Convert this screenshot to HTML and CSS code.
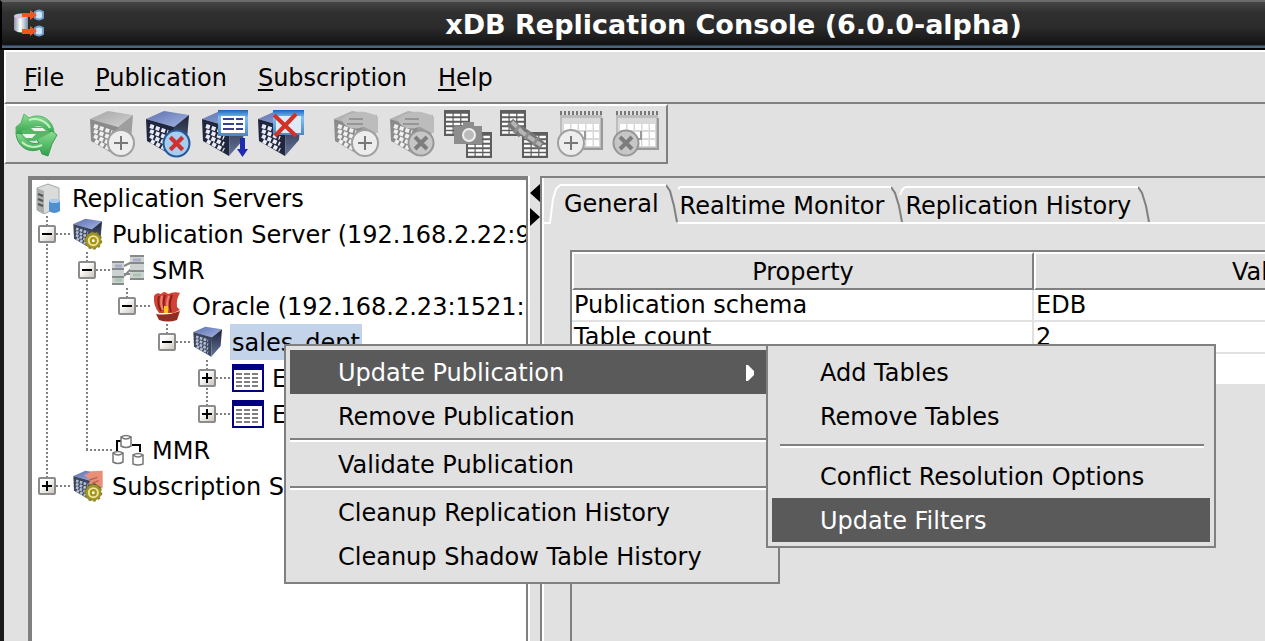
FILE: index.html
```
<!DOCTYPE html>
<html lang="en">
<head>
<meta charset="utf-8">
<title>xDB Replication Console</title>
<link rel="stylesheet" href="styles.css">
</head>
<body>
<svg class="defs" aria-hidden="true">
  <defs>
    <linearGradient id="gTop" x1="0" y1="0" x2="1" y2="1"><stop offset="0" stop-color="#5d70ae"/><stop offset="1" stop-color="#a3b4e4"/></linearGradient>
    <linearGradient id="gTopGray" x1="0" y1="0" x2="1" y2="1"><stop offset="0" stop-color="#a5a5a5"/><stop offset="1" stop-color="#d2d2d2"/></linearGradient>
    <linearGradient id="gRight" x1="0" y1="0" x2="0" y2="1"><stop offset="0" stop-color="#1d2438"/><stop offset="1" stop-color="#65759b"/></linearGradient>
    <linearGradient id="gWin" x1="0" y1="0" x2="0" y2="1"><stop offset="0" stop-color="#1b65bf"/><stop offset=".3" stop-color="#7fc0f4"/><stop offset="1" stop-color="#4d86bd"/></linearGradient>
    <linearGradient id="gGreen" x1="0" y1="0" x2="0" y2="1"><stop offset="0" stop-color="#8bdf91"/><stop offset="1" stop-color="#2f9f4b"/></linearGradient>
    <linearGradient id="gCyl" x1="0" y1="0" x2="1" y2="0"><stop offset="0" stop-color="#8f8fae"/><stop offset=".45" stop-color="#ffffff"/><stop offset="1" stop-color="#8888a4"/></linearGradient>
    <symbol id="cube" viewBox="0 0 48 48">
      <path class="cube-top" d="M2 9 20 1 45 5 30 17Z"/>
      <path class="cube-left" d="M2 9 30 17 29 46 3 31Z"/>
      <path class="cube-right" d="M30 17 45 5 43 30 29 46Z"/>
      <path class="cube-lights" d="M6 16 24 22M6 21 24 28M6 26 24 34M7 31 24 40"/>
    </symbol>
    <symbol id="plusBadge" viewBox="0 0 28 28">
      <circle cx="14" cy="14" r="13" fill="#ededed" stroke="#a0a0a0" stroke-width="2"/>
      <path d="M14 7V21M7 14H21" stroke="#777" stroke-width="2"/>
    </symbol>
    <symbol id="crossBadge" viewBox="0 0 28 28">
      <circle class="cross-disc" cx="14" cy="14" r="12.5"/>
      <path class="cross-mark" d="M8 8 20 20M20 8 8 20"/>
    </symbol>
    <symbol id="grid" viewBox="0 0 26 26">
      <path d="M0 0H26V26H0Z" fill="#5e5e5e"/>
      <path d="M2 5H24M2 9.500H24M2 14H24M2 18.500H24M2 22.500H24" stroke="#fff" stroke-width="2.600" stroke-dasharray="6.500 1.200"/>
    </symbol>
    <symbol id="calendar" viewBox="0 0 48 48">
      <path d="M4 5H46V40H4Z" fill="#bdbdbd"/>
      <path d="M6 8H44V37H6Z" fill="#d9d9d9"/>
      <path d="M4 3H47" stroke="#777" stroke-width="4" stroke-dasharray="2 2"/>
      <path d="M8 17H43M8 25H43M8 33H43" stroke="#fff" stroke-width="6" stroke-dasharray="6 1.500"/>
      <path d="M29 21V29H20M46 8V39H5" fill="none" stroke="#9a9a9a" stroke-width="2"/>
    </symbol>
    <symbol id="hand" viewBox="0 0 48 48">
      <path d="M10 10C14 2 24 4 26 2C34 1 40 4 46 7V23C38 23 34 14 28 18C18 20 12 16 10 10Z"/>
    </symbol>
    <symbol id="gear" viewBox="0 0 22 22">
      <circle cx="11" cy="11" r="8" fill="#eee69a" stroke="#a19525" stroke-width="3"/>
      <circle cx="11" cy="11" r="9.600" fill="none" stroke="#8e8320" stroke-width="2" stroke-dasharray="3 3"/>
      <circle cx="11" cy="11" r="3" fill="#fff" stroke="#a69414" stroke-width="2.500"/>
    </symbol>
    <symbol id="sheet" viewBox="0 0 32 32">
      <path d="M1 3H31V29H1Z" fill="#fff" stroke="#000080" stroke-width="2"/>
      <path d="M0 2H32V8H0Z" fill="#000080"/>
      <path d="M4 12H28M4 16H28M4 20H28M4 24H28" stroke="#808080" stroke-width="2" stroke-dasharray="6 2"/>
    </symbol>
  </defs>
</svg>

<div class="window">
  <header class="titlebar">
    <svg class="app-icon" viewBox="0 0 32 32" aria-hidden="true">
      <path d="M0 7Q7 3 14 7V21Q7 26 0 21Z" fill="url(#gCyl)"/>
      <ellipse cx="7" cy="7" rx="7" ry="2.500" fill="#c9c9dd"/>
      <path d="M21 3Q25 0 29 3V9Q25 12 21 9ZM21 19Q25 16 29 19V25Q25 28 21 25Z" fill="#cfe4f8" stroke="#6f9ccc" stroke-width="2"/>
      <path d="M8 4H16V1L23 6 16 11V8H8ZM8 20H16V17L23 22 16 27V25H8Z" fill="#ee5722"/>
    </svg>
    <h1 class="title">xDB Replication Console (6.0.0-alpha)</h1>
  </header>

  <div class="client">
    <nav class="menubar">
      <button type="button" class="menu-btn"><u>F</u>ile</button>
      <button type="button" class="menu-btn"><u>P</u>ublication</button>
      <button type="button" class="menu-btn"><u>S</u>ubscription</button>
      <button type="button" class="menu-btn"><u>H</u>elp</button>
    </nav>

    <div class="toolbar" role="toolbar">
      <div class="tool-group">
        <button type="button" class="tool" aria-label="Refresh">
          <svg viewBox="0 0 48 48"><path d="M4 23 4 17 9 13 12 4 17 8C29 2 41 10 42 22L38 24C34 16 28 14 20 17L10 25Z" fill="url(#gGreen)" stroke="#56b568"/><path d="M4 23C5 37 17 44 28 39L30 44 36 46 40 34 45 25 40 21 24 28 27 33C20 35 13 31 10 24Z" fill="url(#gGreen)" stroke="#3b9c50"/><path d="M9 21 20 17H33L38 23 23 31H15Z" fill="#54b966"/><path d="M10 24H24L20 28H14ZM19 18H31L34 21H22Z" fill="#edf5ec"/><path d="M17 10C25 7 34 11 38 18M10 32C16 38 24 38 30 35" fill="none" stroke="#c2f0c3" stroke-width="2"/></svg>
        </button>
      </div>
      <div class="tool-group">
        <button type="button" class="tool" aria-label="Create publication" disabled>
          <svg viewBox="0 0 48 48"><use href="#cube" class="gray"/><use href="#plusBadge" x="19" y="19" width="28" height="28"/></svg>
        </button>
        <button type="button" class="tool" aria-label="Remove publication">
          <svg viewBox="0 0 48 48"><use href="#cube" class="blue"/><use href="#crossBadge" x="18" y="19" width="29" height="29" class="red"/></svg>
        </button>
        <button type="button" class="tool" aria-label="Update publication">
          <svg viewBox="0 0 48 48"><use href="#cube" class="blue"/><path d="M18 0H48V26H18Z" fill="url(#gWin)"/><path d="M21 6H45V23H21Z" fill="#fff"/><path d="M23 9H43M23 14H43M23 19H43" stroke="#34438f" stroke-width="2" stroke-dasharray="11 2 7 2"/><path d="M40 28H45V39H48L42.500 47 37 39H40Z" fill="#1d2bb0"/></svg>
        </button>
        <button type="button" class="tool" aria-label="Drop snapshot">
          <svg viewBox="0 0 48 48"><use href="#cube" class="blue"/><path d="M17 0H48V25H17Z" fill="url(#gWin)"/><path d="M20 6H45V23H20Z" fill="#dfeaf8"/><path d="M18 5 40 26M40 4 19 26" stroke="#d33227" stroke-width="4"/></svg>
        </button>
      </div>
      <div class="tool-group">
        <button type="button" class="tool" aria-label="Create subscription" disabled>
          <svg viewBox="0 0 48 48"><use href="#cube" class="gray"/><use href="#hand" fill="#bcbcbc"/><path d="M17 9H31M15 14H31" stroke="#969696" stroke-width="2"/><use href="#plusBadge" x="19" y="19" width="28" height="28"/></svg>
        </button>
        <button type="button" class="tool" aria-label="Remove subscription" disabled>
          <svg viewBox="0 0 48 48"><use href="#cube" class="gray"/><use href="#hand" fill="#bcbcbc"/><path d="M17 9H31M15 14H31" stroke="#969696" stroke-width="2"/><use href="#crossBadge" x="19" y="19" width="28" height="28" class="dim"/></svg>
        </button>
        <button type="button" class="tool" aria-label="Snapshot" disabled>
          <svg viewBox="0 0 48 48"><use href="#grid" width="26" height="26"/><use href="#grid" x="22" y="22" width="26" height="26"/><path d="M10 16H19V12H30V16H38V34H10Z" fill="#8d8d8d"/><circle cx="25" cy="25" r="6" fill="#bbb" stroke="#eee" stroke-width="2"/></svg>
        </button>
        <button type="button" class="tool" aria-label="Synchronize" disabled>
          <svg viewBox="0 0 48 48"><use href="#grid" width="26" height="26"/><use href="#grid" x="22" y="22" width="26" height="26"/><path d="M10 12 22 24M18 19 34 29M27 25 42 36" stroke="#777" stroke-width="9"/><path d="M12 12 22 22M20 21 32 29M32 29 41 35" stroke="#b5b5b5" stroke-width="4"/><path d="M19 16 14 23M29 22 25 29M38 28 33 35" stroke="#8d8d8d" stroke-width="3"/></svg>
        </button>
        <button type="button" class="tool" aria-label="Create schedule" disabled>
          <svg viewBox="0 0 48 48"><use href="#calendar"/><use href="#plusBadge" x="1" y="19" width="28" height="28"/></svg>
        </button>
        <button type="button" class="tool" aria-label="Remove schedule" disabled>
          <svg viewBox="0 0 48 48"><use href="#calendar"/><use href="#crossBadge" x="0" y="19" width="28" height="28" class="dim"/></svg>
        </button>
      </div>
    </div>

    <main class="split">
      <section class="tree" aria-label="Replication servers">
        <div class="row root">
          <svg class="icon" viewBox="0 0 32 32"><path d="M5 6 16 2 27 6V25L12 32 5 28Z" fill="#d9dcda" stroke="#a4a8a6"/><path d="M5 6 12 9V32L5 28Z" fill="#a9adac"/><path d="M6 12 11 14M6 17 11 19M6 22 11 24" stroke="#555" stroke-width="2"/><path d="M17 19Q22 15 28 19V29Q22 33 17 29Z" fill="#4e8fd0"/><ellipse cx="22.500" cy="19" rx="5.500" ry="2" fill="#a9cdf0"/></svg>
          <span class="label">Replication Servers</span>
        </div>
        <ul class="branch">
          <li>
            <div class="row">
              <button type="button" class="toggle" aria-label="Collapse"></button><i class="link"></i>
              <svg class="icon" viewBox="0 0 48 48"><use href="#cube" class="blue small"/><use href="#gear" x="18" y="20" width="28" height="28"/></svg>
              <span class="label">Publication Server (192.168.2.22:9</span>
            </div>
            <ul class="branch">
              <li>
                <div class="row">
                  <button type="button" class="toggle" aria-label="Collapse"></button><i class="link"></i>
                  <svg class="icon" viewBox="0 0 32 32"><path d="M12 12 20 8M12 22 20 14M12 20 20 20" stroke="#888" stroke-width="2"/><path d="M0 7H12V30H0ZM18 1H32V25H18Z" fill="#cdd1cf"/><path d="M0 8H12M0 15H12M0 23H12M0 30H12M18 2H32M18 9H32M18 17H32M18 25H32" stroke="#858b88" stroke-width="2"/><path d="M3 12H10M21 6H29" stroke="#a9abc9" stroke-width="3"/><path d="M3 26H10M21 21H29" stroke="#a9c5af" stroke-width="3"/></svg>
                  <span class="label">SMR</span>
                </div>
                <ul class="branch single">
                  <li>
                    <div class="row">
                      <button type="button" class="toggle" aria-label="Collapse"></button><i class="link"></i>
                      <svg class="icon" viewBox="0 0 32 32"><path d="M2 6Q4 2 9 4Q12 0 16 4Q22 1 28 3Q24 9 25 17L28 20Q24 22 21 23H7Q1 16 2 6Z" fill="#cf4436"/><path d="M7 6Q5 14 9 21M13 5Q10 14 13 21M20 5Q16 14 19 22" fill="none" stroke="#8e1f18" stroke-width="2"/><path d="M10 6Q8 14 11 20M17 6Q14 13 16 20" fill="none" stroke="#ef8271" stroke-width="2"/><path d="M12 16H16V23H12Z" fill="#f3c51d"/><path d="M4 24Q16 26 28 21L25 30Q16 33 7 30Z" fill="#952c20"/></svg>
                      <span class="label">Oracle (192.168.2.23:1521:</span>
                    </div>
                    <ul class="branch single">
                      <li>
                        <div class="row">
                          <button type="button" class="toggle" aria-label="Collapse"></button><i class="link"></i>
                          <svg class="icon" viewBox="0 0 48 48"><use href="#cube" class="blue small"/></svg>
                          <span class="label selected">sales_dept</span>
                        </div>
                        <ul class="branch">
                          <li><div class="row">
                            <button type="button" class="toggle closed" aria-label="Expand"></button><i class="link"></i>
                            <svg class="icon sheet"><use href="#sheet"/></svg><span class="label">E</span>
                          </div></li>
                          <li><div class="row">
                            <button type="button" class="toggle closed" aria-label="Expand"></button><i class="link"></i>
                            <svg class="icon sheet"><use href="#sheet"/></svg><span class="label">E</span>
                          </div></li>
                        </ul>
                      </li>
                    </ul>
                  </li>
                </ul>
              </li>
              <li><div class="row leaf">
                <i class="link"></i>
                <svg class="icon" viewBox="0 0 32 32"><path d="M5 17V7H9M20 11H28V18" fill="none" stroke="#000" stroke-width="2"/><g fill="#fff" stroke="#777" stroke-width="1.500"><path d="M9 3Q14 0 19 3V12Q14 15 9 12ZM1 19Q6 16 11 19V28Q6 31 1 28ZM21 21Q26 18 31 21V30Q26 32 21 30Z"/><path d="M9 3Q14 7 19 3M1 19Q6 23 11 19M21 21Q26 25 31 21"/></g></svg>
                <span class="label">MMR</span>
              </div></li>
            </ul>
          </li>
          <li><div class="row">
            <button type="button" class="toggle closed" aria-label="Expand"></button><i class="link"></i>
            <svg class="icon" viewBox="0 0 48 48"><use href="#cube" class="blue small"/><path d="M18 8 30 2 46 1V28L34 20 24 22 28 15Z" fill="#e98f78"/><path d="M26 15 38 11M30 20 40 16" stroke="#b8604f" stroke-width="2"/><use href="#gear" x="18" y="20" width="28" height="28"/></svg>
            <span class="label">Subscription S</span>
          </div></li>
        </ul>
      </section>

      <div class="divider">
        <svg viewBox="0 0 10 42" aria-hidden="true"><path d="M10 0V18L0 9ZM0 24V42L10 33Z"/></svg>
      </div>

      <section class="details">
        <div class="tabs" role="tablist">
          <button type="button" role="tab" aria-selected="true" class="tab active">
            <svg class="edge-left" viewBox="0 0 12 40"><path d="M0 39H2L5 15 8 5 12 1" stroke="#fff"/></svg>
            <span class="tab-text">General</span>
            <svg class="edge-right" viewBox="0 0 12 40"><path d="M0 1 4 7 8 22 11 38" stroke="#808080"/></svg>
          </button>
          <button type="button" role="tab" aria-selected="false" class="tab">
            <svg class="edge-left" viewBox="0 0 6 36"><path d="M1 9 3 4 6 1" stroke="#fff"/></svg>
            <span class="tab-text">Realtime Monitor</span>
            <svg class="edge-right" viewBox="0 0 12 36"><path d="M0 1 4 7 8 20 11 36" stroke="#808080"/></svg>
          </button>
          <button type="button" role="tab" aria-selected="false" class="tab">
            <svg class="edge-left" viewBox="0 0 6 36"><path d="M1 9 3 4 6 1" stroke="#fff"/></svg>
            <span class="tab-text">Replication History</span>
            <svg class="edge-right" viewBox="0 0 12 36"><path d="M0 1 4 7 8 20 11 36" stroke="#808080"/></svg>
          </button>
        </div>
        <div class="panel" role="tabpanel">
          <div class="scroll">
            <table class="props">
              <thead><tr><th>Property</th><th>Value</th></tr></thead>
              <tbody>
                <tr><td>Publication schema</td><td>EDB</td></tr>
                <tr><td>Table count</td><td>2</td></tr>
                <tr><td></td><td></td></tr>
              </tbody>
            </table>
          </div>
        </div>
      </section>
    </main>
  </div>

  <div class="popup context" role="menu">
    <button type="button" role="menuitem" class="item current">Update Publication<svg class="arrow" viewBox="0 0 8 16" aria-hidden="true"><path d="M0 0H2L8 6V10L2 16H0Z" fill="#fff"/></svg></button>
    <button type="button" role="menuitem" class="item">Remove Publication</button>
    <hr class="sep">
    <button type="button" role="menuitem" class="item">Validate Publication</button>
    <hr class="sep">
    <button type="button" role="menuitem" class="item">Cleanup Replication History</button>
    <button type="button" role="menuitem" class="item">Cleanup Shadow Table History</button>
  </div>
  <div class="popup submenu" role="menu">
    <button type="button" role="menuitem" class="item">Add Tables</button>
    <button type="button" role="menuitem" class="item">Remove Tables</button>
    <hr class="sep inset">
    <button type="button" role="menuitem" class="item">Conflict Resolution Options</button>
    <button type="button" role="menuitem" class="item current">Update Filters</button>
  </div>
</div>
</body>
</html>
```
FILE: styles.css
```
:root {
  --face: #e1e1e1;
  --line: #808080;
  --dark: #5a5a5a;
}

* { box-sizing: border-box; }

body {
  margin: 0;
  color: #000;
  font: 24px/32px "DejaVu Sans", sans-serif;
}

button {
  margin: 0;
  padding: 0;
  border: 0;
  background: none;
  color: inherit;
  font: inherit;
}

.defs { position: absolute; width: 0; height: 0; }

.window {
  position: relative;
  display: flex;
  flex-direction: column;
  height: 100vh;
  overflow: hidden;
  background: var(--face);
}

/* Title bar */
.titlebar {
  display: flex;
  align-items: center;
  height: 50px;
  padding: 0 0 0 12px;
  border-top: 2px solid #6a6a6a;
  border-left: 2px solid #000;
  border-bottom: 2px solid #000;
  background: linear-gradient(#454545, #303030 22%, #2b2b2b 55%, #121212 94%, #4b6382 95%);
}

.app-icon { flex: none; width: 32px; height: 32px; }

.title {
  flex: 1;
  margin: 0;
  padding-left: 156px;
  color: #fff;
  font: bold 27px/32px "DejaVu Sans", sans-serif;
  text-align: center;
  white-space: nowrap;
}

.client {
  flex: 1;
  display: flex;
  flex-direction: column;
  min-height: 0;
  border-left: 4px solid #1a1a1a;
}

/* Menu bar and tool bar */
.menubar {
  display: flex;
  gap: 31px;
  padding: 10px 18px 8px;
  border: solid;
  border-width: 2px 0 2px 2px;
  border-color: #fff #fff var(--line);
}

.menu-btn u { text-underline-offset: 3px; text-decoration-thickness: 2px; }

.toolbar {
  display: flex;
  align-self: flex-start;
  gap: 20px;
  padding: 0 2px;
  border: 2px solid var(--line);
  border-top-color: #fff;
  border-left-color: #fff;
}

.tool-group { display: flex; }
.tool { display: grid; place-items: center; width: 56px; height: 56px; }
.tool svg { width: 48px; height: 48px; }

.blue { --top: url(#gTop); --left: #20263d; --right: url(#gRight); --light: #e9ecf4; }
.gray { --top: url(#gTopGray); --left: #8b8b8b; --right: #9e9e9e; --light: #f0f0f0; }
.small { --left: #3a4560; --light: #b4bccf; }
.red { --disc: #a9cdf0; --rim: #235a9c; --mark: #cc3230; }
.dim { --disc: #c6c6c6; --rim: #969696; --mark: #7d7d7d; }
.cube-top { fill: var(--top); }
.cube-left { fill: var(--left); }
.cube-right { fill: var(--right); }
.cube-lights { fill: none; stroke: var(--light); stroke-width: 4px; stroke-dasharray: 4px 2px; }
.cross-disc { fill: var(--disc); stroke: var(--rim); stroke-width: 2px; }
.cross-mark { stroke: var(--mark); stroke-width: 4px; }

/* Split pane */
.split {
  flex: 1;
  display: grid;
  grid-template-columns: 502px 10px minmax(0, 1fr);
  min-height: 0;
  padding: 12px 0 0 24px;
}

.tree {
  overflow: hidden;
  border: solid var(--line);
  border-width: 4px 2px 0 4px;
  margin-right: 2px;
  background: #fff;
  box-shadow: 2px 0 0 #fff;
}

.branch {
  margin: 0;
  padding: 0;
  list-style: none;
  background: repeating-linear-gradient(#808080 0 2px, transparent 2px 4px) 14px 0 / 2px calc(100% - 18px) no-repeat;
}
.branch .branch { margin-left: 40px; }
.branch.single { background-size: 2px 18px; }

.row { display: flex; align-items: center; height: 36px; padding-left: 6px; white-space: nowrap; }
.root { padding-left: 0; }
.leaf { padding-left: 14px; }
.icon { flex: none; width: 32px; height: 32px; margin-right: 6px; }
.sheet { width: 32px; }
.label { padding: 3px 2px 1px; }
.selected { background: #c3d3e9; }

.toggle {
  flex: none;
  width: 18px;
  height: 18px;
  border: 2px solid #8c8c8c;
  border-radius: 2px;
  background:
    linear-gradient(#000, #000) center / 10px 2px no-repeat,
    linear-gradient(135deg, #fff 30%, #ccc6bc);
}
.toggle.closed {
  background:
    linear-gradient(#000, #000) center / 10px 2px no-repeat,
    linear-gradient(#000, #000) center / 2px 10px no-repeat,
    linear-gradient(135deg, #fff 30%, #ccc6bc);
}

.link {
  flex: none;
  width: 16px;
  height: 2px;
  background: repeating-linear-gradient(90deg, #808080 0 2px, transparent 2px 4px);
}
.leaf .link { width: 26px; }

.divider { padding-top: 8px; }
.divider svg { display: block; width: 10px; height: 42px; }

/* Details */
.details {
  display: flex;
  flex-direction: column;
  border: solid var(--line);
  border-width: 2px 0 0 2px;
  box-shadow: inset 2px 0 0 #fff;
}

.tabs { display: flex; align-items: flex-end; padding: 6px 0 0 6px; }
.tab { display: flex; height: 36px; margin-left: -4px; }
.tab svg { flex: none; height: 100%; fill: none; stroke-width: 2px; }
.edge-left { width: 6px; }
.edge-right { width: 12px; }
.tab-text { padding: 2px 7px 0 0; border-top: 2px solid #fff; white-space: nowrap; }
.active { position: relative; height: 40px; margin: 0 0 -2px; background: linear-gradient(var(--face), var(--face)) 2px 0 / calc(100% - 2px) 100% no-repeat; }
.active .edge-left { width: 12px; }
.active .tab-text { padding-left: 4px; }

.panel { flex: 1; padding: 26px 0 0 28px; border-top: 2px solid #fff; }
.scroll { height: 100%; overflow: hidden; border: solid var(--line); border-width: 2px 0 0 2px; }

.props { width: 924px; table-layout: fixed; border-collapse: separate; border-spacing: 0; background: #fff; }
.props th {
  height: 38px;
  padding: 2px 0 0;
  border: 2px solid var(--line);
  border-top-color: #fff;
  border-left-color: #fff;
  background: var(--face);
  font-weight: normal;
}
.props td {
  height: 32px;
  padding: 0 2px;
  border: solid var(--face);
  border-width: 0 2px 2px 0;
  line-height: 30px;
}

/* Menus */
.popup {
  position: absolute;
  top: 344px;
  padding: 4px;
  border: 2px solid var(--line);
  background: var(--face);
}
.context { left: 284px; width: 496px; }
.submenu { left: 766px; width: 450px; }

.item {
  display: flex;
  align-items: center;
  justify-content: space-between;
  width: 100%;
  height: 44px;
  padding: 2px 20px 0 48px;
  white-space: nowrap;
}
.current { background: var(--dark); color: #fff; }
.arrow { width: 8px; height: 16px; }

.sep {
  height: 4px;
  margin: 0;
  border: solid;
  border-width: 2px 0;
  border-color: var(--line) transparent #fff;
}
.inset { margin: 6px 6px 6px 8px; }
```
